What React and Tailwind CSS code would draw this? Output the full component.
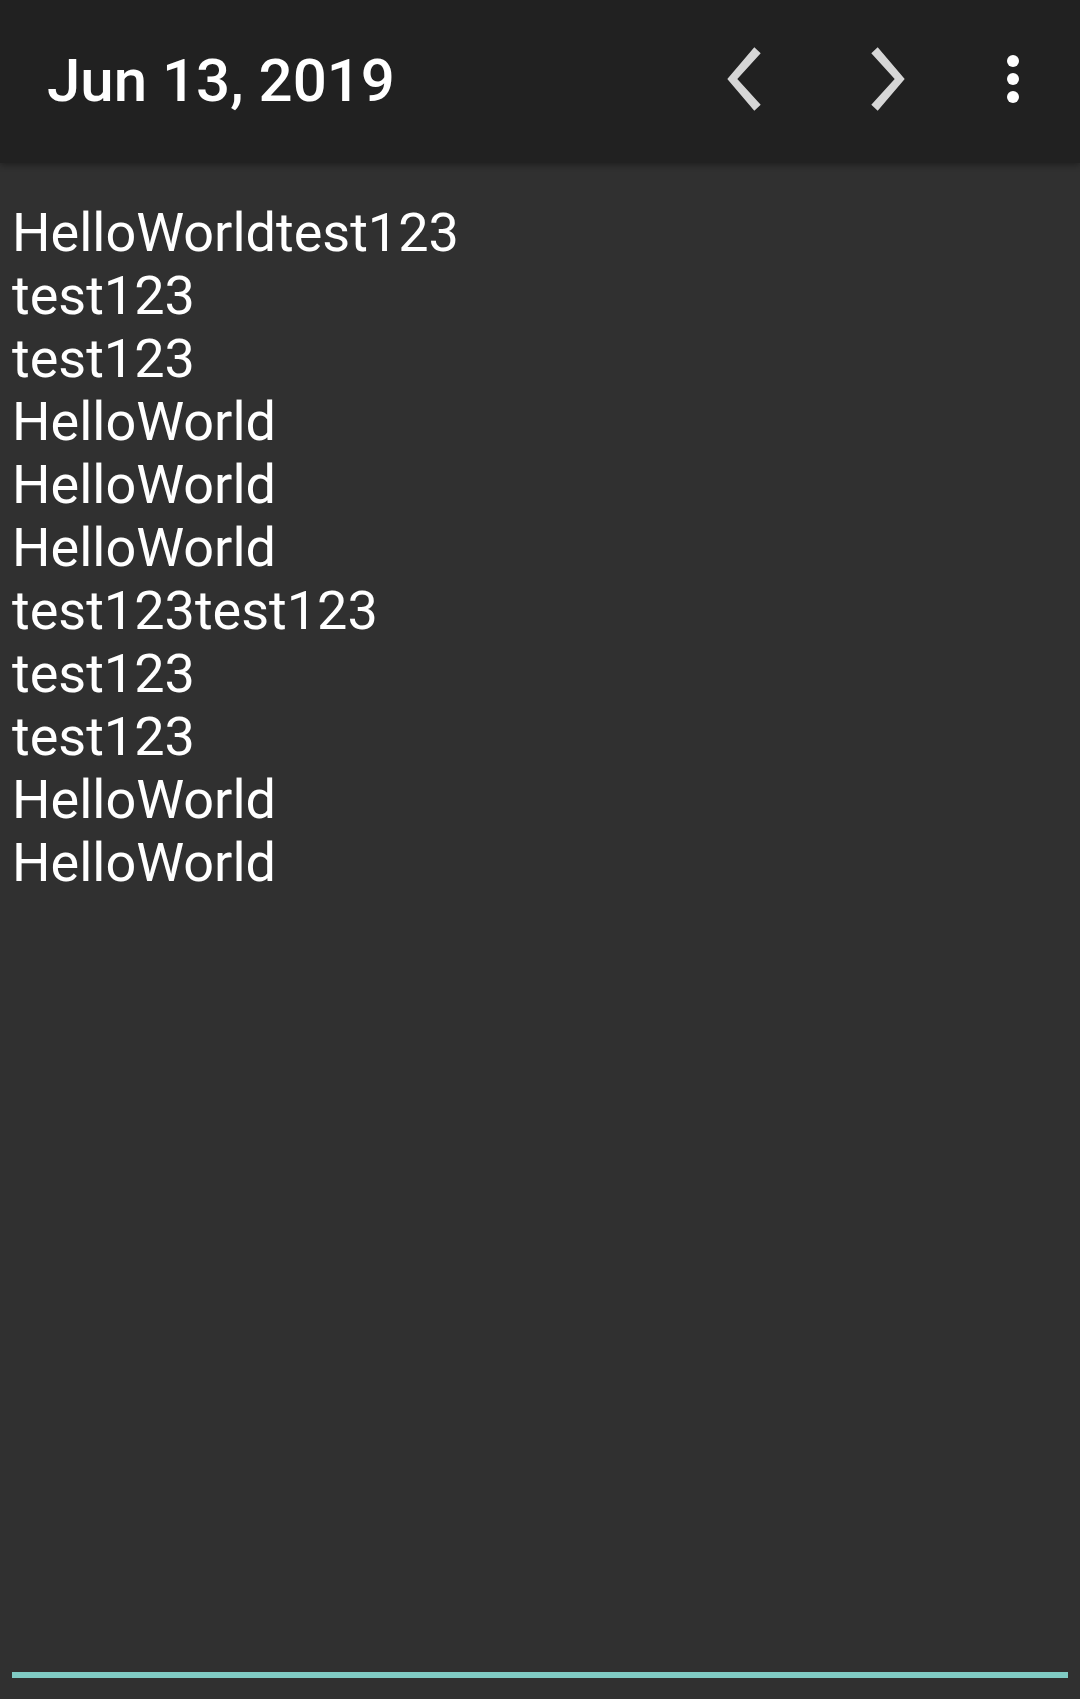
const lines = [
  "HelloWorldtest123",
  "test123",
  "test123",
  "HelloWorld",
  "HelloWorld",
  "HelloWorld",
  "test123test123",
  "test123",
  "test123",
  "HelloWorld",
  "HelloWorld",
];

function Chevron({ flip }) {
  return (
    <svg
      width="34"
      height="64"
      viewBox="0 0 34 64"
      className={flip ? "-scale-x-100" : ""}
    >
      <polygon
        points="27.3,0.3 0.3,32 27.3,63.7 33.7,57.7 10.3,32 33.7,6.3"
        fill="#d6d6d6"
      />
    </svg>
  );
}

function Dots() {
  return (
    <div className="flex flex-col items-center gap-[6px]">
      <span className="block w-[12px] h-[12px] rounded-full bg-white" />
      <span className="block w-[12px] h-[12px] rounded-full bg-white" />
      <span className="block w-[12px] h-[12px] rounded-full bg-white" />
    </div>
  );
}

export default function App() {
  return (
    <div
      className="min-h-screen flex flex-col bg-[#303030] text-white"
      style={{ fontFamily: "Roboto, 'Noto Sans', sans-serif" }}
    >
      {/* Toolbar */}
      <header className="relative z-10 h-[163px] flex items-center bg-[#212121] pr-[14px] shadow-[0_2px_6px_rgba(0,0,0,0.35)]">
        <h1 className="flex-1 pl-[47px] text-[60px] font-medium leading-none mb-[1px]">
          Jun 13, 2019
        </h1>
        <button className="w-[144px] h-[144px] flex items-center justify-center mb-[5px]">
          <Chevron />
        </button>
        <button className="w-[144px] h-[144px] flex items-center justify-center mb-[5px]">
          <Chevron flip />
        </button>
        <button className="w-[106px] h-[144px] flex items-center justify-center mb-[5px]">
          <Dots />
        </button>
      </header>

      {/* Nota */}
      <main className="flex-1 pt-[38px] pl-[12px] text-[54px] leading-[63px]">
        {lines.map((l, i) => (
          <div key={i}>{l}</div>
        ))}
      </main>

      {/* Línea del campo */}
      <div className="px-[12px] pb-[21px]">
        <div className="h-[6px] bg-[#80cbc4]" />
      </div>
    </div>
  );
}
